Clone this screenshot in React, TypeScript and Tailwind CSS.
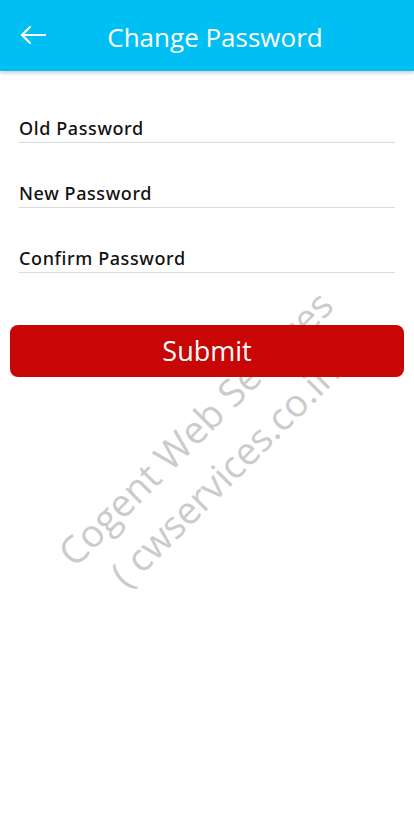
import { FC } from "react";

const fields = [
  { id: "old", label: "Old Password" },
  { id: "new", label: "New Password" },
  { id: "confirm", label: "Confirm Password" },
];

const BackArrow: FC = () => (
  <svg width="26" height="20" viewBox="0 0 26 20" fill="none" stroke="white" strokeWidth="2.2" strokeLinecap="round" strokeLinejoin="round">
    <path d="M25 10H2" />
    <path d="M10 2L2 10l8 8" />
  </svg>
);

export default function App() {
  return (
    <div className="relative min-h-[836px] w-[414px] overflow-hidden bg-white font-['Open_Sans',sans-serif]">
      <header className="relative z-20 flex h-[71px] items-center bg-[#00bff3] shadow-[0_2px_4px_rgba(0,0,0,0.2)]">
        <button className="absolute left-[20px] top-[25px]">
          <BackArrow />
        </button>
        <h1 className="w-full pl-[16px] pt-[4px] text-center text-[26px] text-white">Change Password</h1>
      </header>

      {/* watermark */}
      <div className="pointer-events-none absolute left-[213px] top-[446px] z-0 -translate-x-1/2 -translate-y-1/2 -rotate-45 whitespace-nowrap text-center text-[38px] leading-[52px] text-[#cbcbcb]">
        <div>Cogent Web Services</div>
        <div>( cwservices.co.in )</div>
      </div>

      <form className="relative z-10 flex flex-col px-[19px] pt-[41px]">
        {fields.map((f) => (
          <div key={f.id} className="mb-[34px] flex h-[31px] items-end border-b border-[#dcdcdc]">
            <input
              type="password"
              placeholder={f.label}
              className="w-full bg-transparent pb-0 font-['Noto_Sans',sans-serif] text-[18px] font-medium tracking-[0.6px] text-black outline-none placeholder:text-[#111]"
            />
          </div>
        ))}
      </form>

      <div className="relative z-10 px-[10px] pt-[18px]">
        <button className="flex h-[52px] w-full items-center justify-center rounded-[8px] bg-[#c90606] text-[27px] text-white">
          Submit
        </button>
      </div>
    </div>
  );
}
